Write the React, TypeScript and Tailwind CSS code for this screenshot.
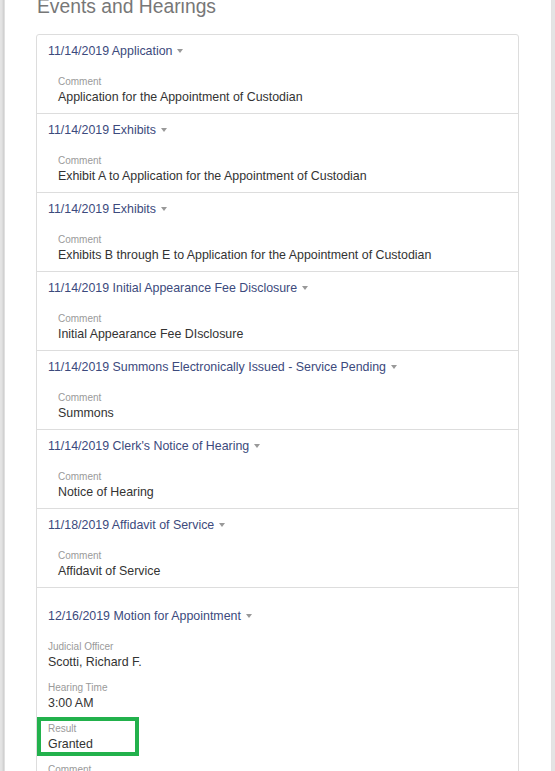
import React from "react";

type Field = { label: string; value: string };

type Event = {
  date: string;
  title: string;
  fields: Field[];
  hearing?: boolean;
};

const events: Event[] = [
  {
    date: "11/14/2019",
    title: "Application",
    fields: [{ label: "Comment", value: "Application for the Appointment of Custodian" }],
  },
  {
    date: "11/14/2019",
    title: "Exhibits",
    fields: [{ label: "Comment", value: "Exhibit A to Application for the Appointment of Custodian" }],
  },
  {
    date: "11/14/2019",
    title: "Exhibits",
    fields: [
      { label: "Comment", value: "Exhibits B through E to Application for the Appointment of Custodian" },
    ],
  },
  {
    date: "11/14/2019",
    title: "Initial Appearance Fee Disclosure",
    fields: [{ label: "Comment", value: "Initial Appearance Fee DIsclosure" }],
  },
  {
    date: "11/14/2019",
    title: "Summons Electronically Issued - Service Pending",
    fields: [{ label: "Comment", value: "Summons" }],
  },
  {
    date: "11/14/2019",
    title: "Clerk's Notice of Hearing",
    fields: [{ label: "Comment", value: "Notice of Hearing" }],
  },
  {
    date: "11/18/2019",
    title: "Affidavit of Service",
    fields: [{ label: "Comment", value: "Affidavit of Service" }],
  },
  {
    date: "12/16/2019",
    title: "Motion for Appointment",
    hearing: true,
    fields: [
      { label: "Judicial Officer", value: "Scotti, Richard F." },
      { label: "Hearing Time", value: "3:00 AM" },
      { label: "Result", value: "Granted" },
      { label: "Comment", value: "Motion for Appointment of Custodian" },
    ],
  },
];

const Caret = () => (
  <span className="ml-[5px] inline-block h-0 w-0 border-x-[3.5px] border-t-[4px] border-x-transparent border-t-[#999] align-middle relative top-[-1px]" />
);

const FieldBlock = ({ field }: { field: Field }) => {
  const highlight = field.label === "Result";
  return (
    <div className="relative">
      {highlight && (
        <div className="absolute left-[-11px] top-[-5px] h-[39px] w-[102px] border-[4px] border-[#22b14c]" />
      )}
      <div className="text-[10px] leading-[14px] text-[#9a9a9a]">{field.label}</div>
      <div className="text-[12.4px] leading-[17px] text-[#333]">{field.value}</div>
    </div>
  );
};

const EventItem = ({ event }: { event: Event }) => (
  <div
    className={
      event.hearing
        ? "border-t border-[#ddd] px-[11px] pt-[20px] pb-[8px]"
        : "border-t border-[#ddd] px-[11px] pt-[8px] pb-[7px] first:border-t-0"
    }
  >
    <div className="text-[12.4px] leading-[17px] text-[#3c4a7d] cursor-pointer">
      {event.date} {event.title}
      <Caret />
    </div>
    <div
      className={
        event.hearing
          ? "mt-[15px] flex flex-col gap-[10px]"
          : "mt-[15px] pl-[10px] flex flex-col gap-[10px]"
      }
    >
      {event.fields.map((f, i) => (
        <FieldBlock key={i} field={f} />
      ))}
    </div>
  </div>
);

export default function App() {
  return (
    <div
      className="min-h-screen bg-[#e4e4e4] overflow-hidden"
      style={{ fontFamily: '"Liberation Sans", Arial, sans-serif' }}
    >
      <div className="min-h-screen ml-[4px] mr-[4px] bg-white shadow-[-1px_0_2px_rgba(0,0,0,0.12)] border-l border-[#e0e0e0] pl-[31px] pr-[32px]">
        <h2 className="mt-[-4px] mb-[16px] pl-[1px] text-[19.3px] leading-[22px] font-normal text-[#777]">
          Events and Hearings
        </h2>
        <div className="rounded-[3px] border border-[#ddd]">
          {events.map((e, i) => (
            <EventItem key={i} event={e} />
          ))}
        </div>
      </div>
    </div>
  );
}
